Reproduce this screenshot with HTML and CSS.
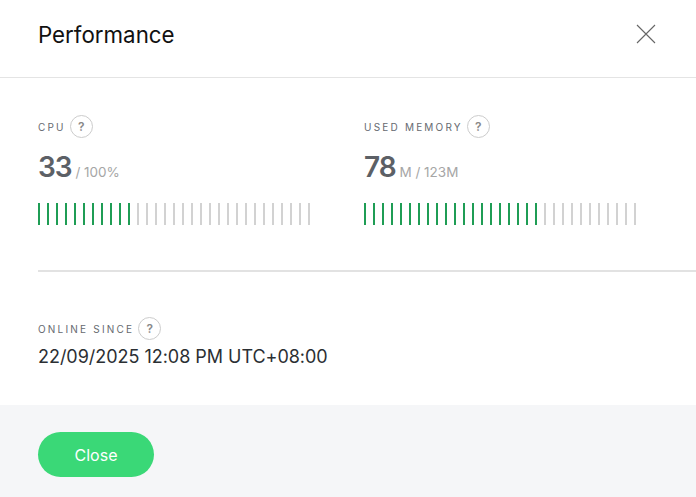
FILE: index.html
```html
<!DOCTYPE html>
<html lang="en">
  <head>
    <meta charset="UTF-8" />
    <meta name="viewport" content="width=device-width, initial-scale=1.0" />
    <title>Performance</title>
    <link rel="stylesheet" href="styles.css">
  </head>
  <body>
    <div class="header">
      <h2>Performance</h2>
      <svg class="closeIcon" width="20" height="20" viewBox="0 0 20 20">
        <path d="M1 1L19 19M19 1L1 19" stroke="#666" stroke-width="1.1" fill="none" />
      </svg>
    </div>

    <div class="content">
      <div class="stats">
        <div class="stat">
          <div class="label">CPU <span class="help">?</span></div>
          <div class="value"><b>33</b> <span>/ 100%</span></div>
          <div class="bars" id="cpuBars"></div>
        </div>
        <div class="stat">
          <div class="label">USED MEMORY <span class="help">?</span></div>
          <div class="value"><b>78</b> <span>M / 123M</span></div>
          <div class="bars" id="memoryBars"></div>
        </div>
      </div>
      <div class="line"></div>
      <div class="label">ONLINE SINCE <span class="help">?</span></div>
      <div class="since">22/09/2025 12:08 PM UTC+08:00</div>
    </div>

    <div class="footer">
      <button class="closeButton" type="button">Close</button>
    </div>

    <script>
      function drawBars(id, used) {
        const box = document.getElementById(id);
        for (let i = 0; i < 31; i++) {
          const bar = document.createElement("i");
          if (i < used) bar.className = "on";
          box.appendChild(bar);
        }
      }
      drawBars("cpuBars", 11);
      drawBars("memoryBars", 20);
    </script>
  </body>
</html>
```

FILE: styles.css
```css
body {
    font-family: "Inter", "Liberation Sans", sans-serif;
    background-color: #fff;
    margin: 0;
    height: 497px;
    overflow: hidden;
    display: flex;
    flex-direction: column;
}
.header {
    height: 68px;
    border-bottom: 1px solid #e4e4e4;
    display: flex;
    align-items: center;
    justify-content: space-between;
    padding: 0 40px 9px 38px;
    flex-shrink: 0;
}
h2 {
    margin: 0;
    font-size: 22.3px;
    font-weight: 400;
    color: #111;
}
.content {
    flex: 1;
    padding: 37px 0 0 38px;
}
.stats {
    display: flex;
}
.stat {
    width: 326px;
}
.label {
    display: flex;
    align-items: center;
    gap: 4px;
    height: 23px;
    font-size: 10px;
    letter-spacing: 2.2px;
    color: #666a70;
}
.help {
    width: 23px;
    height: 23px;
    box-sizing: border-box;
    border: 1px solid #ccc;
    border-radius: 50%;
    display: flex;
    align-items: center;
    justify-content: center;
    font-size: 12px;
    font-weight: 600;
    letter-spacing: 0;
    color: #888;
}
.value {
    margin-top: 11px;
    height: 36px;
    line-height: 36px;
    color: #a6a6a6;
    font-size: 13.5px;
}
.value b {
    font-size: 28px;
    font-weight: 600;
    letter-spacing: -1px;
    color: #5c6066;
}
.bars {
    display: flex;
    gap: 7px;
    margin-top: 18px;
}
.bars i {
    width: 2px;
    height: 22px;
    background-color: #d2d2d2;
}
.bars i.on {
    background-color: #1f9d55;
}
.line {
    height: 2px;
    background-color: #e2e2e2;
    margin: 45px 0 45px;
}
.since {
    margin-top: 5px;
    font-size: 18px;
    line-height: 24px;
    letter-spacing: -0.03px;
    color: #2b2f33;
}
.footer {
    height: 92px;
    background-color: #f5f6f8;
    padding: 27px 38px 0;
    box-sizing: border-box;
    flex-shrink: 0;
}
.closeButton {
    width: 116px;
    height: 45px;
    border: none;
    border-radius: 23px;
    background-color: #3ad877;
    color: #fff;
    font-family: inherit;
    font-size: 16px;
    cursor: pointer;
}
```
